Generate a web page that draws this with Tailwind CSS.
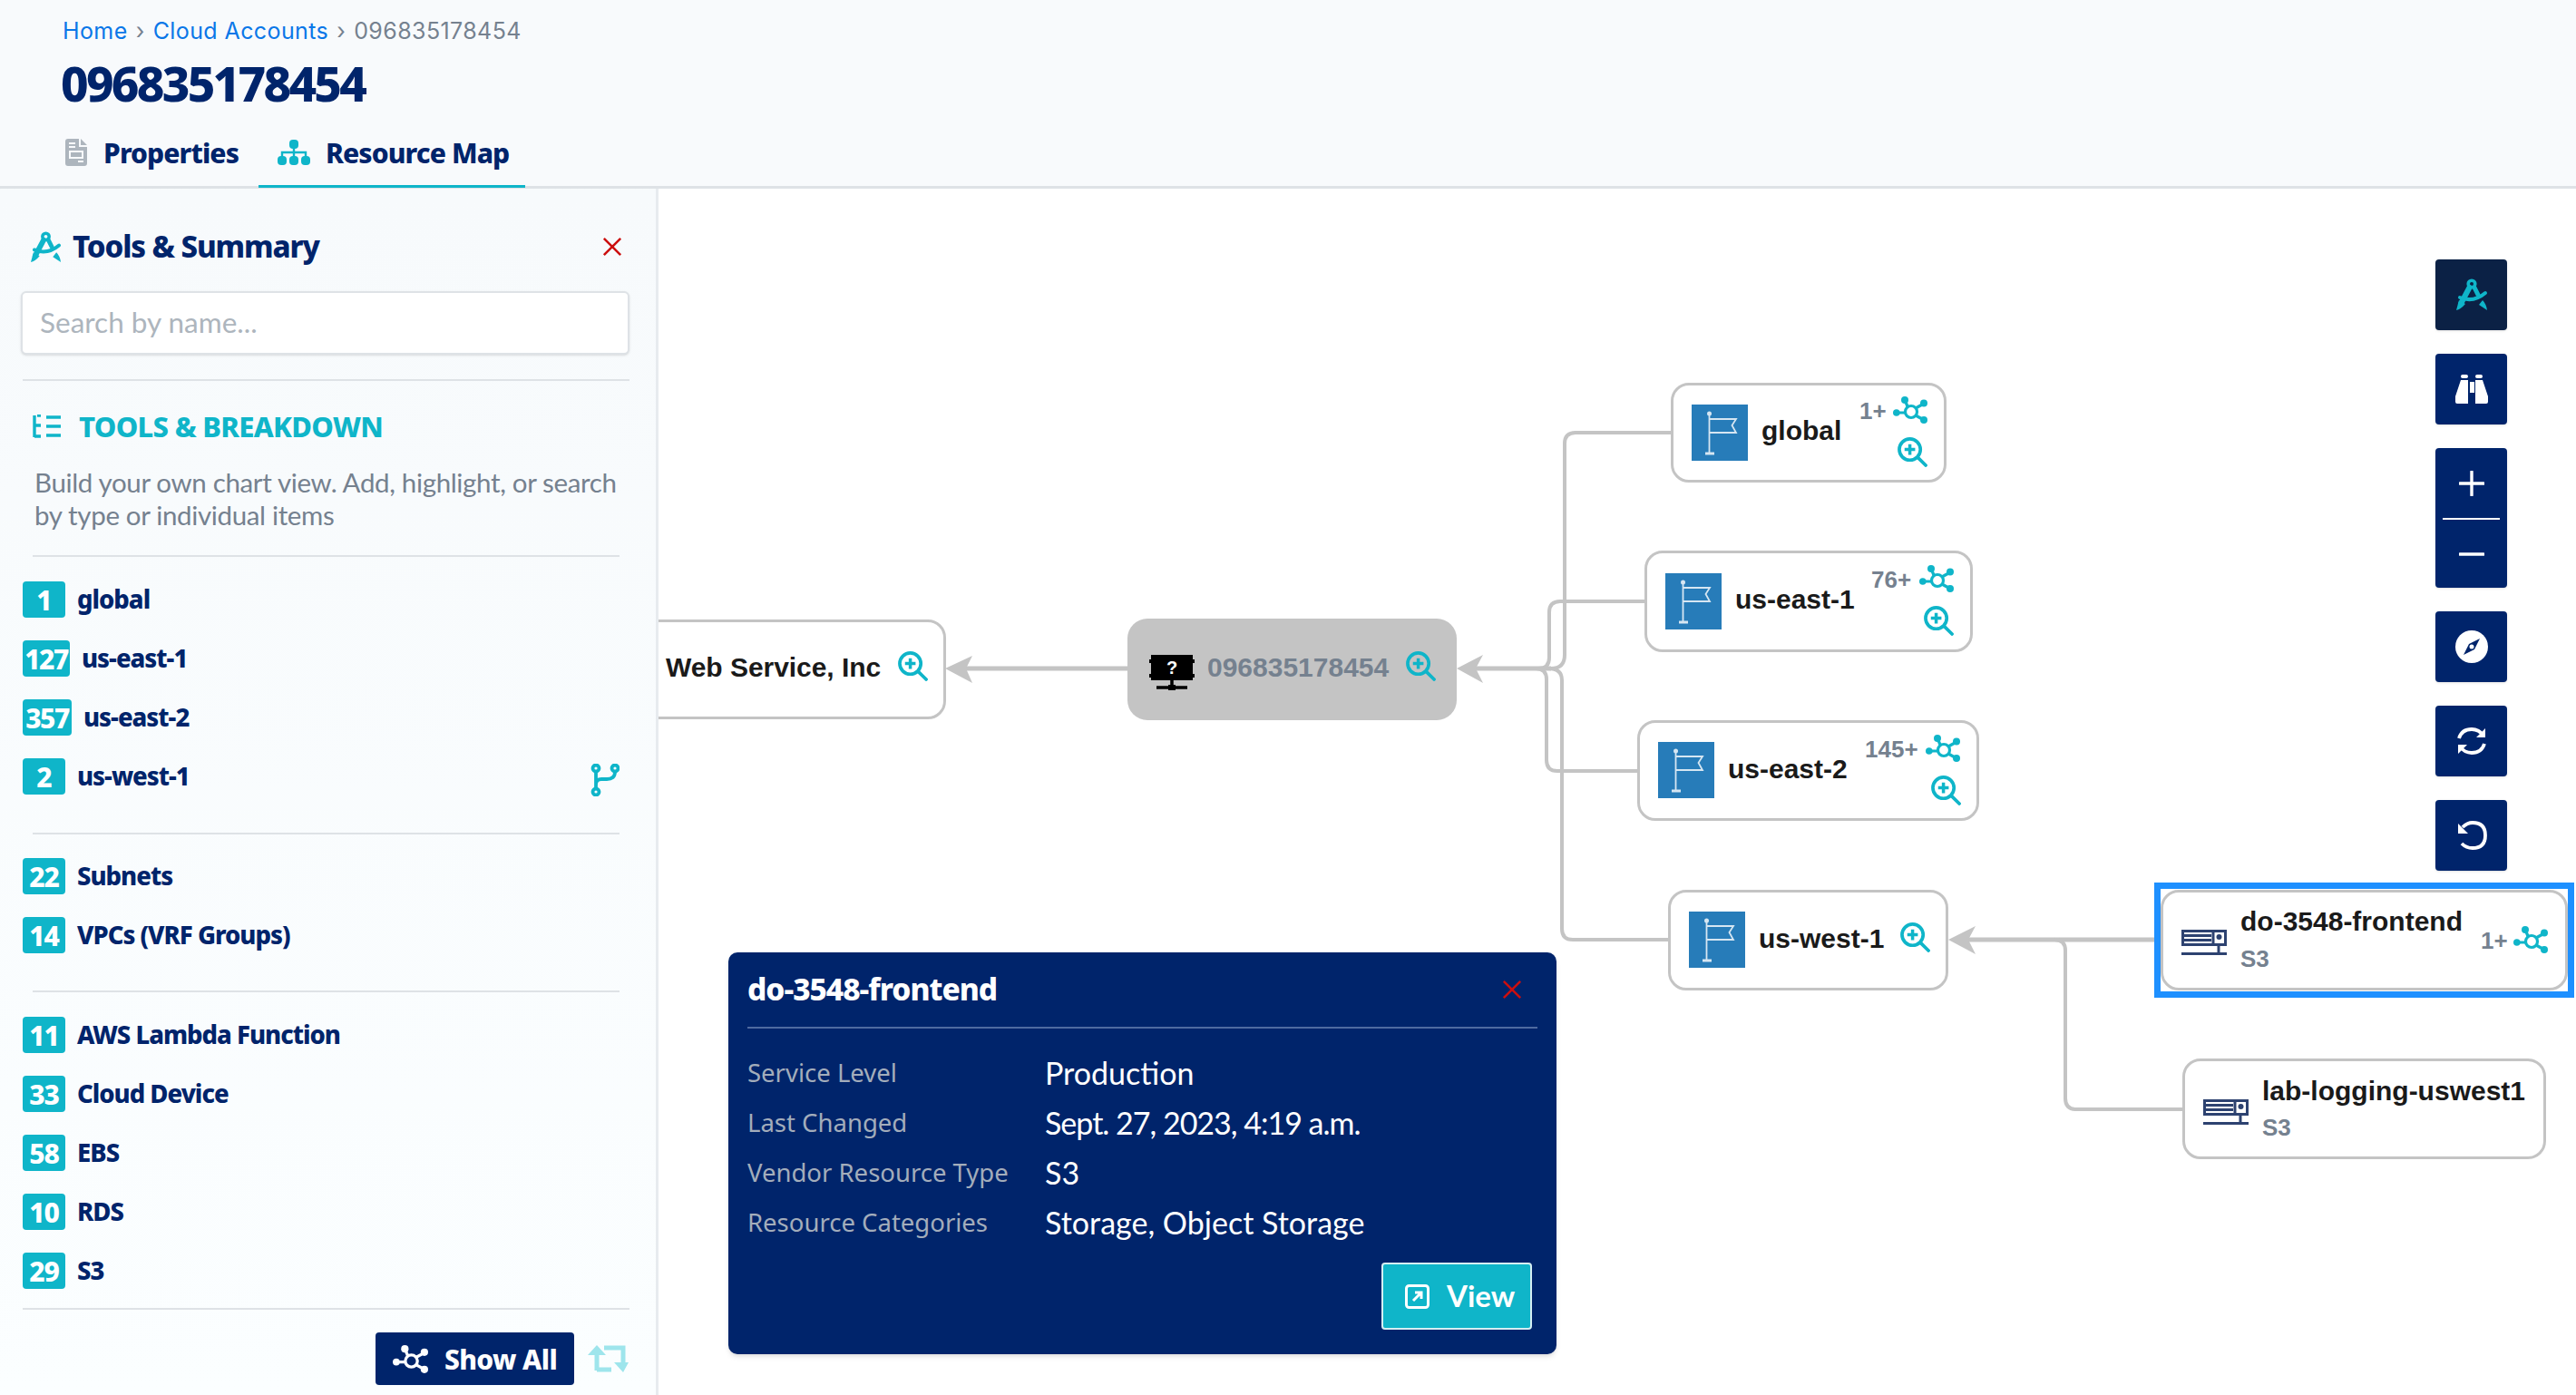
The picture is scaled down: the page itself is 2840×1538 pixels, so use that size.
<!DOCTYPE html>
<html>
<head>
<meta charset="utf-8">
<script src="https://cdn.jsdelivr.net/npm/@tailwindcss/browser@4"></script>
</head>
<body>
<svg class="absolute w-0 h-0">
  <symbol id="net" viewBox="0 0 38 30"><g fill="none" stroke="currentColor" stroke-width="3.200"><circle cx="20" cy="17" r="6.500"/><path d="M3 18H13M13 4L16 11M34 8L25 13M34 26L25 21"/></g><g fill="currentColor"><circle cx="3.800" cy="18" r="3.800"/><circle cx="13" cy="4" r="4"/><circle cx="34" cy="7.500" r="4"/><circle cx="34" cy="26" r="4"/></g></symbol>
  <symbol id="zoom" viewBox="0 0 34 34"><g fill="none" stroke="currentColor" stroke-width="3.800"><circle cx="14" cy="14" r="12"/><path d="M8 14H20M14 8V20" stroke-width="3.600"/><path d="M23 23L32 32" stroke-linecap="round"/></g></symbol>
  <symbol id="flag" viewBox="0 0 62 62"><rect width="62" height="62" fill="#277cb9"/><g fill="none" stroke="#d6e6f2" stroke-width="1.800"><path d="M19.500 10V53"/><path d="M19.500 16H49L44.500 23L49 31H19.500"/><path d="M15 54H25" stroke-width="3"/></g><circle cx="19.500" cy="10" r="2.500" fill="#d6e6f2"/></symbol>
  <symbol id="s3" viewBox="0 0 50 28"><g fill="none" stroke="#2d4270" stroke-width="3"><rect x="1.500" y="1.500" width="47" height="15"/><path d="M2 6.500H33M2 11.500H33M35 1.500V16.500M41 17V26M0 26.500H50"/></g><circle cx="41.500" cy="8" r="3" fill="#2d4270"/></symbol>
  <symbol id="tool" viewBox="0 0 36 36"><g fill="none" stroke="currentColor" stroke-linecap="round"><circle cx="18" cy="6" r="3.800" stroke-width="3.600"/><path d="M15.500 10L6 28" stroke-width="6"/><path d="M21 10L25 18" stroke-width="5"/><path d="M5 21Q20 27 33 16" stroke-width="4"/></g><path d="M1 35L4 24L11 28Q6 34 1 35ZM35 35L26 29L30 24Q34 28 35 35Z" fill="currentColor"/></symbol>
  <symbol id="x" viewBox="0 0 24 24"><path d="M2 2L22 22M22 2L2 22" fill="none" stroke="#cc0f0f" stroke-width="2.800"/></symbol>
</svg>

<div class="w-[2840px] h-[1538px] overflow-hidden flex flex-col bg-white text-[#00246b] [font-family:Lato,sans-serif]">
  <!-- header -->
  <header class="h-[208px] shrink-0 bg-[#f8fafc] border-b-[3px] border-[#dee2e6] pl-[69px] relative">
    <nav class="h-[26px] pt-[35px] flex items-center text-[25px] tracking-[0.4px] [font-family:Inter,sans-serif] font-normal">
      <span class="text-[#0a77e8]">Home</span>
      <span class="text-[#75818f] mx-[9px]">›</span>
      <span class="text-[#0a77e8]">Cloud Accounts</span>
      <span class="text-[#75818f] mx-[9px]">›</span>
      <span class="text-[#75818f]">096835178454</span>
    </nav>
    <h1 class="mt-[28px] h-[58px] leading-[58px] -ml-[2px] text-[53px] font-extrabold tracking-[-2.7px] text-[#00246b] [font-family:'Noto_Sans',sans-serif]">096835178454</h1>
    <div class="flex items-center absolute left-0 top-[136px] h-[69px] pl-[72px] text-[30px] font-extrabold tracking-[-0.9px] whitespace-nowrap [font-family:'Noto_Sans',sans-serif]">
      <svg class="w-[24px] h-[30px] mb-[6px]" viewBox="0 0 24 30"><path d="M3 0H15V9H24V27Q24 30 21 30H3Q0 30 0 27V3Q0 0 3 0ZM17 0L24 7H17Z" fill="#adb5bd"/><path d="M4 5H11M4 9H11M5 14H19V21H5ZM14 25H20" fill="none" stroke="#f8fafc" stroke-width="2"/></svg>
      <span class="ml-[18px] w-[150px] mb-[4px]">Properties</span>
      <div class="ml-[21px] w-[294px] h-full flex items-center border-b-[3px] border-[#0fb5c9] pl-[21px] -mb-[3px]">
        <svg class="w-[36px] h-[28px] mb-[6px]" viewBox="0 0 36 28"><g fill="#0fb5c9"><rect x="13" y="0" width="10" height="10" rx="4"/><rect x="0" y="18" width="10" height="10" rx="4"/><rect x="13" y="18" width="10" height="10" rx="4"/><rect x="26" y="18" width="10" height="10" rx="4"/></g><path d="M18 9V19M5 19V14H31V19" fill="none" stroke="#0fb5c9" stroke-width="2.400"/></svg>
        <span class="ml-[17px] mb-[4px]">Resource Map</span>
      </div>
    </div>
  </header>

  <main class="flex-1 flex min-h-0">
    <!-- sidebar -->
    <aside class="w-[726px] shrink-0 border-r-[3px] border-[#e7ebef] bg-gradient-to-b from-[#f7fafc] to-[#fbfeff] relative">
      <div class="pt-[44px] h-[84px] flex items-center pl-[33px] pr-[37px] [font-family:'Noto_Sans',sans-serif]">
        <svg class="w-[35px] h-[35px] text-[#0fb5c9]"><use href="#tool"/></svg>
        <h2 class="ml-[12px] text-[33px] font-extrabold tracking-[-1.100px] flex-1">Tools &amp; Summary</h2>
        <svg class="w-[22px] h-[24px]"><use href="#x"/></svg>
      </div>
      <div class="mt-[29px] ml-[23px] mr-[29px] h-[70px] bg-white border-2 border-[#dee2e6] rounded-[6px] shadow-sm flex items-center pl-[19px] text-[31.500px] text-[#adb5bd]">Search by name...</div>
      <div class="mt-[27px] ml-[25px] mr-[29px] h-[2px] bg-[#dee2e6]"></div>
      <div class="mt-[30px] h-[40px] pl-[36px] flex items-center text-[#0fb5c9]">
        <svg class="w-[31px] h-[26px]" viewBox="0 0 31 26"><path d="M2 1V25M2 12H9M2 24H9M5 1H9M15 3H31M15 13H31M15 23H31" fill="none" stroke="currentColor" stroke-width="3.400"/></svg>
        <span class="ml-[20px] text-[31px] font-extrabold tracking-[-0.7px] [font-family:'Noto_Sans',sans-serif]">TOOLS &amp; BREAKDOWN</span>
      </div>
      <p class="mt-[24px] pl-[38px] w-[690px] text-[29.500px] leading-[36px] tracking-[-0.35px] text-[#75818f]">Build your own chart view. Add, highlight, or search by type or individual items</p>
      <div class="mt-[26px] ml-[36px] mr-[40px] h-[2px] bg-[#dee2e6]"></div>

      <ul class="mt-[27px] pl-[25px] flex flex-col gap-[25px] text-[27.500px] font-extrabold tracking-[-1px] [font-family:'Noto_Sans',sans-serif]">
        <li class="h-[40px] flex items-center gap-[13px]"><span class="w-[47px] h-[40px] rounded-[4px] bg-[#0fb5c9] text-white text-[30px] flex items-center justify-center">1</span>global</li>
        <li class="h-[40px] flex items-center gap-[13px]"><span class="w-[52px] h-[40px] rounded-[4px] bg-[#0fb5c9] text-white text-[30px] tracking-[-1.500px] flex items-center justify-center">127</span>us-east-1</li>
        <li class="h-[40px] flex items-center gap-[13px]"><span class="w-[54px] h-[40px] rounded-[4px] bg-[#0fb5c9] text-white text-[30px] tracking-[-1.500px] flex items-center justify-center">357</span>us-east-2</li>
        <li class="h-[40px] flex items-center gap-[13px] relative"><span class="w-[47px] h-[40px] rounded-[4px] bg-[#0fb5c9] text-white text-[30px] flex items-center justify-center">2</span>us-west-1
          <svg class="absolute left-[626px] top-[6px] w-[32px] h-[36px]" viewBox="0 0 32 36"><g fill="none" stroke="#0fb5c9" stroke-width="3.800"><circle cx="6" cy="5" r="3.500"/><circle cx="6" cy="31" r="3.500"/><circle cx="27" cy="5" r="3.500"/><path d="M6 9V27M27 9Q27 17 18 17H12Q6 17 6 23"/></g></svg>
        </li>
      </ul>
      <div class="mt-[42px] ml-[36px] mr-[40px] h-[2px] bg-[#dee2e6]"></div>
      <ul class="mt-[26px] pl-[25px] flex flex-col gap-[25px] text-[27.500px] font-extrabold tracking-[-1px] [font-family:'Noto_Sans',sans-serif]">
        <li class="h-[40px] flex items-center gap-[13px]"><span class="w-[47px] h-[40px] rounded-[4px] bg-[#0fb5c9] text-white text-[30px] flex items-center justify-center">22</span>Subnets</li>
        <li class="h-[40px] flex items-center gap-[13px]"><span class="w-[47px] h-[40px] rounded-[4px] bg-[#0fb5c9] text-white text-[30px] flex items-center justify-center">14</span>VPCs (VRF Groups)</li>
      </ul>
      <div class="mt-[41px] ml-[36px] mr-[40px] h-[2px] bg-[#dee2e6]"></div>
      <ul class="mt-[27px] pl-[25px] flex flex-col gap-[25px] text-[27.500px] font-extrabold tracking-[-1px] [font-family:'Noto_Sans',sans-serif]">
        <li class="h-[40px] flex items-center gap-[13px]"><span class="w-[47px] h-[40px] rounded-[4px] bg-[#0fb5c9] text-white text-[30px] flex items-center justify-center">11</span>AWS Lambda Function</li>
        <li class="h-[40px] flex items-center gap-[13px]"><span class="w-[47px] h-[40px] rounded-[4px] bg-[#0fb5c9] text-white text-[30px] flex items-center justify-center">33</span>Cloud Device</li>
        <li class="h-[40px] flex items-center gap-[13px]"><span class="w-[47px] h-[40px] rounded-[4px] bg-[#0fb5c9] text-white text-[30px] flex items-center justify-center">58</span>EBS</li>
        <li class="h-[40px] flex items-center gap-[13px]"><span class="w-[47px] h-[40px] rounded-[4px] bg-[#0fb5c9] text-white text-[30px] flex items-center justify-center">10</span>RDS</li>
        <li class="h-[40px] flex items-center gap-[13px]"><span class="w-[47px] h-[40px] rounded-[4px] bg-[#0fb5c9] text-white text-[30px] flex items-center justify-center">29</span>S3</li>
      </ul>
      <div class="mt-[21px] ml-[25px] mr-[29px] h-[2px] bg-[#dee2e6]"></div>
      <div class="mt-[25px] mr-[30px] flex justify-end items-center gap-[14px]">
        <button class="w-[219px] h-[58px] rounded-[4px] bg-[#00246b] text-white flex items-center justify-center gap-[18px] text-[30px] font-extrabold tracking-[-0.6px] [font-family:'Noto_Sans',sans-serif]">
          <svg class="w-[39px] h-[31px]"><use href="#net"/></svg>Show All
        </button>
        <svg class="w-[46px] h-[30px]" viewBox="0 0 46 30"><g fill="none" stroke="#9ee5ec" stroke-width="5"><path d="M11 28V6M27 27H11M19 3H40V24"/></g><path d="M11 0L21 11H1ZM40 30L30 19H46Z" fill="#9ee5ec"/></svg>
      </div>
    </aside>

    <!-- canvas -->
    <section class="flex-1 relative overflow-hidden bg-white">
      <div class="absolute left-[-726px] top-[-208px] w-[2840px] h-[1538px] [font-family:'Liberation_Sans',sans-serif] font-bold text-[30px] text-[#1a1a1a]">
        <svg class="absolute inset-0" width="2840" height="1538" viewBox="0 0 2840 1538">
          <g fill="none" stroke="#c4c4c4" stroke-width="4">
            <path d="M1842 477H1737Q1725 477 1725 489V722Q1725 737 1710 737"/>
            <path d="M1813 663H1720Q1708 663 1708 675V725Q1708 737 1696 737"/>
            <path d="M1805 850H1717Q1705 850 1705 838V749Q1705 737 1693 737"/>
            <path d="M1840 1036H1734Q1722 1036 1722 1024V750Q1722 737 1707 737"/>
            <path d="M1710 737H1625" stroke-width="5"/>
            <path d="M1243 737H1060" stroke-width="5"/>
            <path d="M2375 1036H2165" stroke-width="5"/>
            <path d="M2407 1223H2289Q2277 1223 2277 1211V1048Q2277 1036 2265 1036"/>
          </g>
          <g fill="#c4c4c4">
            <path d="M1606 737L1635 722L1627 737L1635 753Z"/>
            <path d="M1042 737L1072 723L1065 737L1072 753Z"/>
            <path d="M2148 1036L2178 1021L2170 1036L2178 1052Z"/>
          </g>
        </svg>

        <!-- Web Service -->
        <div class="absolute left-[600px] top-[683px] w-[443px] h-[110px] rounded-[20px] border-[3px] border-[#c4c4c4] bg-white"></div>
        <span class="absolute left-[734px] top-[719px] leading-[34px] tracking-[-0.05px]">Web Service, Inc</span>
        <svg class="absolute left-[990px] top-[718px] w-[33px] h-[33px] text-[#0fb5c9]"><use href="#zoom"/></svg>

        <!-- account -->
        <div class="absolute left-[1243px] top-[682px] w-[363px] h-[112px] rounded-[22px] bg-[#c4c4c4]">
          <svg class="absolute left-[24px] top-[40px] w-[50px] h-[40px]" viewBox="0 0 50 40"><path d="M2 0H48V5H50V9H48V21H50V25H48V28H2V25H0V21H2V9H0V5H2Z" fill="#000"/><path d="M25 28V36M8 36H42" stroke="#000" stroke-width="3.500" fill="none"/><rect x="21" y="33" width="8" height="6" fill="#000"/><text x="25" y="21" text-anchor="middle" fill="#fff" font-size="20" font-weight="700" font-family="Liberation Sans">?</text></svg>
          <span class="absolute left-[88px] top-[37px] leading-[34px] text-[#75818f]">096835178454</span>
          <svg class="absolute left-[307px] top-[36px] w-[33px] h-[33px] text-[#0fb5c9]"><use href="#zoom"/></svg>
        </div>

        <!-- global -->
        <div class="absolute left-[1842px] top-[422px] w-[304px] h-[110px] rounded-[20px] border-[3px] border-[#c4c4c4] bg-white">
          <svg class="absolute left-[20px] top-[21px] w-[62px] h-[62px]"><use href="#flag"/></svg>
          <span class="absolute left-[97px] top-[33px] leading-[34px]">global</span>
          <span class="absolute left-[205px] top-[13px] leading-[30px] text-[26px] text-[#75818f]">1+</span>
          <svg class="absolute left-[242px] top-[12px] w-[38px] h-[30px] text-[#0fb5c9]"><use href="#net"/></svg>
          <svg class="absolute left-[247px] top-[57px] w-[33px] h-[33px] text-[#0fb5c9]"><use href="#zoom"/></svg>
        </div>
        <!-- us-east-1 -->
        <div class="absolute left-[1813px] top-[607px] w-[362px] h-[112px] rounded-[20px] border-[3px] border-[#c4c4c4] bg-white">
          <svg class="absolute left-[20px] top-[22px] w-[62px] h-[62px]"><use href="#flag"/></svg>
          <span class="absolute left-[97px] top-[34px] leading-[34px]">us-east-1</span>
          <span class="absolute left-[247px] top-[14px] leading-[30px] text-[26px] text-[#75818f]">76+</span>
          <svg class="absolute left-[300px] top-[13px] w-[38px] h-[30px] text-[#0fb5c9]"><use href="#net"/></svg>
          <svg class="absolute left-[305px] top-[58px] w-[33px] h-[33px] text-[#0fb5c9]"><use href="#zoom"/></svg>
        </div>
        <!-- us-east-2 -->
        <div class="absolute left-[1805px] top-[794px] w-[377px] h-[111px] rounded-[20px] border-[3px] border-[#c4c4c4] bg-white">
          <svg class="absolute left-[20px] top-[21px] w-[62px] h-[62px]"><use href="#flag"/></svg>
          <span class="absolute left-[97px] top-[34px] leading-[34px]">us-east-2</span>
          <span class="absolute left-[248px] top-[14px] leading-[30px] text-[26px] text-[#75818f]">145+</span>
          <svg class="absolute left-[315px] top-[13px] w-[38px] h-[30px] text-[#0fb5c9]"><use href="#net"/></svg>
          <svg class="absolute left-[321px] top-[58px] w-[33px] h-[33px] text-[#0fb5c9]"><use href="#zoom"/></svg>
        </div>
        <!-- us-west-1 -->
        <div class="absolute left-[1839px] top-[981px] w-[309px] h-[111px] rounded-[20px] border-[3px] border-[#c4c4c4] bg-white">
          <svg class="absolute left-[20px] top-[21px] w-[62px] h-[62px]"><use href="#flag"/></svg>
          <span class="absolute left-[97px] top-[34px] leading-[34px]">us-west-1</span>
          <svg class="absolute left-[253px] top-[33px] w-[33px] h-[33px] text-[#0fb5c9]"><use href="#zoom"/></svg>
        </div>
        <!-- selected -->
        <div class="absolute left-[2375px] top-[973px] w-[463px] h-[127px] border-[7px] border-[#1e90ff] bg-white">
          <div class="absolute left-0 top-[1px] w-[449px] h-[111px] rounded-[20px] border-[3px] border-[#c4c4c4] bg-white">
            <svg class="absolute left-[20px] top-[41px] w-[50px] h-[28px]"><use href="#s3"/></svg>
            <span class="absolute left-[85px] top-[15px] leading-[34px]">do-3548-frontend</span>
            <span class="absolute left-[85px] top-[58px] leading-[30px] text-[26px] text-[#75818f]">S3</span>
            <span class="absolute left-[350px] top-[38px] leading-[30px] text-[26px] text-[#75818f]">1+</span>
            <svg class="absolute left-[386px] top-[37px] w-[38px] h-[30px] text-[#0fb5c9]"><use href="#net"/></svg>
          </div>
        </div>
        <!-- lab -->
        <div class="absolute left-[2406px] top-[1167px] w-[401px] h-[111px] rounded-[20px] border-[3px] border-[#c4c4c4] bg-white">
          <svg class="absolute left-[20px] top-[42px] w-[50px] h-[28px]"><use href="#s3"/></svg>
          <span class="absolute left-[85px] top-[16px] leading-[34px]">lab-logging-uswest1</span>
          <span class="absolute left-[85px] top-[58px] leading-[30px] text-[26px] text-[#75818f]">S3</span>
        </div>

        <!-- toolbar -->
        <div class="absolute left-[2685px] top-[286px] w-[79px] flex flex-col gap-[26px] text-white">
          <button class="h-[78px] rounded-[4px] bg-[#0b2145] shadow-sm flex items-center justify-center"><svg class="w-[36px] h-[36px] text-[#0fb5c9]"><use href="#tool"/></svg></button>
          <button class="h-[78px] rounded-[4px] bg-[#00246b] shadow-sm flex items-center justify-center">
            <svg class="w-[36px] h-[32px]" viewBox="0 0 36 32"><g fill="#fff"><rect x="6" y="0" width="8" height="4" rx="2"/><rect x="22" y="0" width="8" height="4" rx="2"/><path d="M6 6H14V32H2Q0 32 0 30V24ZM22 6H30L36 24V30Q36 32 34 32H22Z"/><rect x="16" y="8" width="5" height="12"/></g></svg>
          </button>
          <div class="h-[154px] rounded-[4px] bg-[#00246b] shadow-sm flex flex-col items-center">
            <svg class="mt-[25px] w-[28px] h-[28px]" viewBox="0 0 28 28"><path d="M14 1V27M1 14H27" stroke="#fff" stroke-width="3.400" stroke-linecap="round" fill="none"/></svg>
            <div class="mt-[24px] w-[63px] h-[2px] bg-white"></div>
            <svg class="mt-[24px] w-[28px] h-[28px]" viewBox="0 0 28 28"><path d="M1 14H27" stroke="#fff" stroke-width="3.400" stroke-linecap="round" fill="none"/></svg>
          </div>
          <button class="h-[78px] rounded-[4px] bg-[#00246b] shadow-sm flex items-center justify-center">
            <svg class="w-[36px] h-[36px]" viewBox="0 0 36 36"><circle cx="18" cy="18" r="18" fill="#fff"/><path d="M27 9L21 21L9 27L15 15Z" fill="#00246b"/><circle cx="18" cy="18" r="2.500" fill="#fff"/></svg>
          </button>
          <button class="h-[78px] rounded-[4px] bg-[#00246b] shadow-sm flex items-center justify-center">
            <svg class="w-[34px] h-[34px]" viewBox="0 0 34 34"><g fill="none" stroke="#fff" stroke-width="3.800"><path d="M3 14Q6 4 17 4Q25 4 30 11"/><path d="M31 20Q28 30 17 30Q9 30 4 23"/></g><path d="M32 3V13H22ZM2 31V21H12Z" fill="#fff"/></svg>
          </button>
          <button class="h-[78px] rounded-[4px] bg-[#00246b] shadow-sm flex items-center justify-center">
            <svg class="w-[34px] h-[34px]" viewBox="0 0 34 34"><path d="M7 8Q12 3 18 3Q32 3 32 17Q32 31 18 31Q11 31 6 26" fill="none" stroke="#fff" stroke-width="3.800"/><path d="M2 4V15H13Z" fill="#fff"/></svg>
          </button>
        </div>

        <!-- popup -->
        <div class="absolute left-[803px] top-[1050px] w-[913px] h-[443px] rounded-[10px] bg-[#00246b] shadow-md px-[21px] font-normal text-white [font-family:Lato,sans-serif]">
          <div class="h-[84px] flex items-center justify-between border-b-2 border-[#4f6aa0]">
            <span class="text-[33.500px] font-extrabold [font-family:'Noto_Sans',sans-serif] tracking-[-1px] -mt-[2px]">do-3548-frontend</span>
            <svg class="w-[22px] h-[24px] mr-[17px]"><use href="#x"/></svg>
          </div>
          <dl class="mt-[21px] grid grid-cols-[328px_1fr] auto-rows-[55px] items-center text-[34px]">
            <dt class="text-[27.500px] text-[#a3adbb] [font-family:'Noto_Sans',sans-serif]">Service Level</dt><dd>Production</dd>
            <dt class="text-[27.500px] text-[#a3adbb] [font-family:'Noto_Sans',sans-serif]">Last Changed</dt><dd class="tracking-[-1px]">Sept. 27, 2023, 4:19 a.m.</dd>
            <dt class="text-[27.500px] text-[#a3adbb] [font-family:'Noto_Sans',sans-serif]">Vendor Resource Type</dt><dd>S3</dd>
            <dt class="text-[27.500px] text-[#a3adbb] [font-family:'Noto_Sans',sans-serif]">Resource Categories</dt><dd>Storage, Object Storage</dd>
          </dl>
          <button class="absolute left-[720px] top-[342px] w-[166px] h-[74px] rounded-[4px] border-2 border-[#d5eef2] bg-[#0fb5c9] flex items-center pl-[24px] gap-[19px] text-[33px] font-bold">
            <svg class="w-[27px] h-[27px]" viewBox="0 0 27 27"><rect x="1.500" y="1.500" width="24" height="24" rx="3" fill="none" stroke="#fff" stroke-width="3"/><path d="M9 18L17 10M11 9H18V16" fill="none" stroke="#fff" stroke-width="3"/></svg>View
          </button>
        </div>
      </div>
    </section>
  </main>
</div>
</body>
</html>
